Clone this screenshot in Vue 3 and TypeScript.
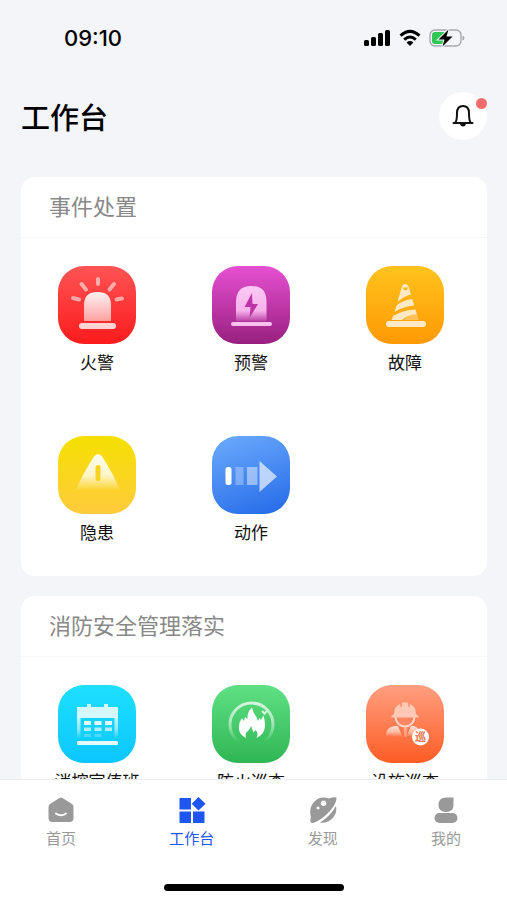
<script setup lang="ts">
import { ref } from 'vue'

interface Entry {
  id: string
  label: string
}

interface Section {
  title: string
  entries: Entry[]
}

const sections: Section[] = [
  {
    title: '事件处置',
    entries: [
      { id: 'fire', label: '火警' },
      { id: 'warning', label: '预警' },
      { id: 'fault', label: '故障' },
      { id: 'hazard', label: '隐患' },
      { id: 'action', label: '动作' },
    ],
  },
  {
    title: '消防安全管理落实',
    entries: [
      { id: 'duty', label: '消控室值班' },
      { id: 'patrol', label: '防火巡查' },
      { id: 'facility', label: '设施巡查' },
    ],
  },
]

const tabs: Entry[] = [
  { id: 'home', label: '首页' },
  { id: 'workbench', label: '工作台' },
  { id: 'discover', label: '发现' },
  { id: 'mine', label: '我的' },
]

const activeTab = ref('workbench')
</script>

<template>
  <div class="screen">
    <svg class="defs" width="0" height="0" aria-hidden="true">
      <defs>
        <linearGradient id="soft" x1="0" y1="0" x2="0" y2="1">
          <stop offset="0" stop-color="#fff" stop-opacity=".92" />
          <stop offset="1" stop-color="#fff" stop-opacity=".55" />
        </linearGradient>
        <linearGradient id="dome" x1="0" y1="0" x2="0" y2="1">
          <stop offset="0" stop-color="#ffd6fa" stop-opacity=".92" />
          <stop offset=".7" stop-color="#ffc4f4" stop-opacity=".88" />
          <stop offset="1" stop-color="#ffc4f4" stop-opacity=".15" />
        </linearGradient>
        <linearGradient id="fade" x1="0" y1="0" x2="0" y2="1">
          <stop offset="0" stop-color="#fff" stop-opacity=".95" />
          <stop offset=".6" stop-color="#fff" stop-opacity=".75" />
          <stop offset="1" stop-color="#fff" stop-opacity=".05" />
        </linearGradient>
        <linearGradient id="ring" x1="0" y1="0" x2="0" y2="1">
          <stop offset="0" stop-color="#fff" stop-opacity=".75" />
          <stop offset=".5" stop-color="#fff" stop-opacity=".5" />
          <stop offset=".9" stop-color="#fff" stop-opacity="0" />
        </linearGradient>
      </defs>
    </svg>

    <div class="status">
      <span class="time">09:10</span>
      <div class="signals">
        <svg width="27" height="18" viewBox="0 0 27 18" aria-hidden="true">
          <rect x="0" y="11" width="5" height="6" rx="1.500" />
          <rect x="7" y="8" width="5" height="9" rx="1.500" />
          <rect x="14" y="4" width="5" height="13" rx="1.500" />
          <rect x="21" y="1" width="5" height="16" rx="1.500" />
        </svg>
        <svg width="22" height="18" viewBox="0 0 22 18" fill="none" stroke="#000" stroke-width="3" aria-hidden="true">
          <path d="M1.500 6.600Q11-1.900 20.500 6.600" />
          <path d="M5.200 10.600Q11 5.500 16.800 10.600" />
          <path d="M7.600 13.400Q11 10.600 14.400 13.400L11 17Z" fill="#000" stroke="none" />
        </svg>
        <svg width="36" height="20" viewBox="0 0 36 20" aria-hidden="true">
          <rect x="1" y="2" width="31" height="16" rx="5" fill="none" stroke="#a5a8ac" stroke-width="1.400" />
          <path d="M6 4H15V16H6Q3 16 3 13V7Q3 4 6 4Z" fill="#30c755" />
          <path d="M33.500 7.500Q35.500 8 35.500 10T33.500 12.500Z" fill="#a5a8ac" />
          <path d="M19.500 1.500L9.500 11.500H15.500L13.500 18.500L23.500 8.500H17.500Z" stroke="#f3f5f9" stroke-width="2" paint-order="stroke" />
        </svg>
      </div>
    </div>

    <header class="header">
      <h1>工作台</h1>
      <button class="bell" type="button" aria-label="通知">
        <svg width="22" height="24" viewBox="0 0 22 24" fill="none" stroke="#111" stroke-width="2" stroke-linejoin="round" stroke-linecap="round" aria-hidden="true">
          <path d="M1.500 19H20.500M3.500 18.500Q5 16 5 9Q5 2 11 2Q17 2 17 9Q17 16 18.500 18.500" />
          <path d="M8 20H14Q13.500 22.500 11 22.500Q8.500 22.500 8 20Z" fill="#111" stroke="none" />
        </svg>
        <span class="dot"></span>
      </button>
    </header>

    <main class="content">
      <section v-for="section in sections" :key="section.title" class="card">
        <h2>{{ section.title }}</h2>
        <div class="grid">
          <button v-for="entry in section.entries" :key="entry.id" class="entry" type="button">
            <span class="tile" :class="entry.id">
              <svg viewBox="0 0 78 78" width="78" height="78" fill="none" aria-hidden="true">
                <g v-if="entry.id === 'fire'">
                  <path d="M26 55V39Q26 26 39.500 26Q53 26 53 39V55Z" fill="url(#soft)" />
                  <rect x="21" y="57" width="37" height="6" rx="3" fill="#fff" fill-opacity=".8" />
                  <g stroke="#fff" stroke-width="4" stroke-linecap="round" stroke-opacity=".55">
                    <path d="M40 13V18M23.500 18L28 23.500M56 18L51.500 23.500M15 32L21 33.500M64 32.500L58.500 33.500" />
                  </g>
                </g>
                <g v-else-if="entry.id === 'warning'">
                  <path d="M24 55V36Q24 20 39.500 20Q54.500 20 54.500 36V55Z" fill="url(#dome)" />
                  <rect x="19" y="56" width="41" height="4" rx="2" fill="#ffd0f6" fill-opacity=".9" />
                  <path d="M40 27L32.500 41H38.500L37.500 52L46 38H40.500Z" fill="#bd34a6" />
                </g>
                <g v-else-if="entry.id === 'fault'" fill="#ffe9c4">
                  <path fill-rule="evenodd" d="M32.500 32L35.500 22Q36.500 18 39 18Q42 18 43 22L45 28.500Q38 30 31.500 36ZM37 21.500H42L41 24H38Z" />
                  <path d="M30.500 39.500Q37 34 46.200 33L48.300 39.500Q37 40.500 28.500 46Z" />
                  <path d="M27 50Q38 43.500 49.500 43.500L51 48.500Q43 48 36 54H25.500Z" />
                  <path d="M37 54Q45 47.500 51 48.500L53 54Z" fill-opacity=".4" />
                  <rect x="20" y="55" width="40" height="6" rx="3" />
                </g>
                <g v-else-if="entry.id === 'hazard'">
                  <path d="M36 20.500Q40 15.500 44 20.500Q55 37 62 54H18Q25 37 36 20.500Z" fill="url(#fade)" />
                  <rect x="37.500" y="29" width="5" height="16" rx="2.500" fill="#f9d322" />
                </g>
                <g v-else-if="entry.id === 'action'" fill="#fff">
                  <rect x="13.500" y="31" width="6" height="18" rx="2.500" />
                  <rect x="23.500" y="31" width="8" height="18" fill-opacity=".3" />
                  <rect x="35" y="31" width="10.500" height="18" fill-opacity=".45" />
                  <path d="M47.500 25L65 40.500L47.500 56Z" fill-opacity=".65" />
                </g>
                <g v-else-if="entry.id === 'duty'" fill="#fff">
                  <path d="M19 22H29V19H33V22H46V19H50V22H60V33H19Z" fill-opacity=".82" />
                  <path d="M19 33H22.500V56H19ZM56.500 33H60V56H56.500Z" fill="url(#ring)" />
                  <rect x="19" y="56" width="41" height="4" rx="1.500" fill-opacity=".9" />
                  <path d="M26 36H33V40H26ZM36.500 36H43.500V40H36.500ZM47 36H54V40H47Z" fill-opacity=".88" />
                  <path d="M26 42.500H33V46H26ZM36.500 42.500H43.500V46H36.500ZM47 42.500H54V46H47Z" fill-opacity=".65" />
                  <path d="M26 49H33V52H26ZM36.500 49H43.500V52H36.500Z" fill-opacity=".25" />
                </g>
                <g v-else-if="entry.id === 'patrol'">
                  <circle cx="39.500" cy="39.500" r="21.500" stroke="url(#ring)" stroke-width="3" />
                  <path d="M50 26L52.500 28.500L55 26" stroke="#d8f8e0" stroke-width="2" />
                  <path d="M34 53Q26 49 27 41Q27.500 36 30 33L32 36L33 32L35.500 34Q35 27 40 22.500Q41 28 44.500 32L46 36L47.500 33L49 35L51.500 30.500Q54 39 52.500 44Q51 50 44.500 53Q47 48 43.500 45L41.500 47.500L39 41Q37 46 34.500 47Q33 50 34 53Z" fill="#fff" />
                </g>
                <g v-else>
                  <path d="M20 53V50Q20 42 29 41H32L37 53Z" fill="url(#ring)" />
                  <path d="M45 41H48Q54 42 55 53H40Z" fill="url(#ring)" />
                  <path d="M37.500 42.500H41.500L40.500 52H38.500Z" fill="#fff" fill-opacity=".35" />
                  <circle cx="39" cy="32" r="9.500" fill="#ff8660" stroke="#ffd5c6" stroke-width="2" />
                  <path d="M28 29Q28 21 34 19L35.500 25L36 17.500H42L42.500 25L44 19Q50 21 50 29L52.500 31V32.500H25.500V31Z" fill="#ffc9b6" />
                  <circle cx="54.500" cy="52" r="8.500" fill="#fff" />
                  <text x="54.500" y="56" text-anchor="middle" font-size="11" font-weight="700" fill="#e8764d">巡</text>
                </g>
              </svg>
            </span>
            <span class="label">{{ entry.label }}</span>
          </button>
        </div>
      </section>
    </main>

    <footer class="footer">
      <nav class="tabs">
        <a
          v-for="tab in tabs"
          :key="tab.id"
          href="#"
          class="tab"
          :class="{ active: tab.id === activeTab }"
          @click.prevent="activeTab = tab.id"
        >
          <svg width="28" height="28" viewBox="0 0 28 28" fill="currentColor" aria-hidden="true">
            <g v-if="tab.id === 'home'">
              <path d="M12.500 2Q14 1 15.500 2L25 8Q26.500 9 26.500 11V22Q26.500 26 22.500 26H5.500Q1.500 26 1.500 22V11Q1.500 9 3 8Z" />
              <path d="M9 17.500Q14 21 19 17.500" fill="none" stroke="#fff" stroke-width="2" stroke-linecap="round" />
            </g>
            <g v-else-if="tab.id === 'workbench'">
              <path d="M1.500 2H13V13.500H1.500ZM1.500 15.500H13V27H1.500ZM15 15.500H26.500V27H15ZM20.500 1L27.500 7.800L20.500 14.600L13.700 7.800Z" />
            </g>
            <g v-else-if="tab.id === 'discover'">
              <path fill-rule="evenodd" d="M27.500 1.500Q28 7 20.500 15.500Q12 24.500 4 27Q0 27.500 2 21.500Q-.5 12 5 6Q11-.5 20 2.500Q24 .8 27.500 1.500ZM14.500 4.500A2.800 2.800 0 1 0 14.600 4.500ZM9 10.500A1.500 1.500 0 1 0 9.100 10.500Z" />
              <path d="M27 10Q28.500 17.500 23 22.800Q18 27.500 11 26.500Q21 20.500 27 10Z" />
            </g>
            <g v-else>
              <path d="M14 1.500H21.500V9Q21.500 16 14 16Q6.500 16 6.500 9Q6.500 1.500 14 1.500Z" />
              <rect x="2.500" y="17" width="23" height="10" rx="5" />
            </g>
          </svg>
          <span>{{ tab.label }}</span>
        </a>
      </nav>
      <div class="indicator"></div>
    </footer>
  </div>
</template>

<style>
body {
  margin: 0;
}
</style>

<style scoped>
.screen {
  display: flex;
  flex-direction: column;
  height: 100vh;
  background: #f3f5f9;
  color: #111;
  font-family: 'Noto Sans CJK SC', sans-serif;
}

.defs {
  position: absolute;
}

button {
  padding: 0;
  border: 0;
  background: none;
  color: inherit;
  font: inherit;
  cursor: pointer;
}

.status {
  display: flex;
  flex: none;
  align-items: center;
  justify-content: space-between;
  height: 76px;
  padding: 0 42px 0 64px;
}

.time {
  font-family: Inter, sans-serif;
  font-size: 22px;
  font-weight: 500;
  color: #000;
}

.signals {
  display: flex;
  align-items: center;
  gap: 8px;
}

.header {
  display: flex;
  flex: none;
  align-items: center;
  justify-content: space-between;
  padding: 16px 20px 37px 21px;
}

h1 {
  margin: 0;
  font-size: 29px;
  font-weight: 500;
  line-height: 48px;
  color: #000;
}

.bell {
  position: relative;
  display: grid;
  place-items: center;
  width: 48px;
  height: 48px;
  border-radius: 50%;
  background: #fff;
}

.dot {
  position: absolute;
  top: 6px;
  right: 0;
  width: 11px;
  height: 11px;
  border-radius: 50%;
  background: #f56c6c;
}

.content {
  flex: 1;
  min-height: 0;
  padding: 0 20px 0 21px;
  overflow-y: auto;
  scrollbar-width: none;
}

.card {
  margin-bottom: 20px;
  border-radius: 14px;
  background: #fff;
}

h2 {
  margin: 0;
  padding: 0 28px 4px;
  border-bottom: 1px solid #f7f7f9;
  font-size: 22px;
  font-weight: 400;
  line-height: 56px;
  color: #888;
}

.grid {
  display: grid;
  grid-template-columns: repeat(3, 78px);
  justify-content: space-between;
  row-gap: 62px;
  padding: 28px 43px 32px 37px;
}

.entry {
  display: flex;
  flex-direction: column;
  align-items: center;
  gap: 6px;
}

.tile {
  display: block;
  width: 78px;
  height: 78px;
  border-radius: 26px;
}

.tile svg,
.tab svg {
  display: block;
}

.fire { background: linear-gradient(#ff5455, #fb1b1c); }
.warning { background: linear-gradient(#e650d2, #98207f); }
.fault { background: linear-gradient(#ffc31d, #ff9904); }
.hazard { background: linear-gradient(#f5e000, #ffcb3d); }
.action { background: linear-gradient(160deg, #6dabfd, #2369e8); }
.duty { background: linear-gradient(#1fe0ff, #0bc6fc); }
.patrol { background: linear-gradient(#5fe084, #2fb654); }
.facility { background: linear-gradient(#ff9f80, #fc5c25); }

.label {
  font-size: 17px;
  line-height: 24px;
  white-space: nowrap;
}

.footer {
  flex: none;
  border-top: 1px solid #ebecef;
  background: #fff;
}

.tabs {
  display: flex;
  justify-content: space-between;
  padding: 16px 46px 0;
}

.tab {
  display: flex;
  flex-direction: column;
  align-items: center;
  gap: 3px;
  color: #999;
  font-size: 15px;
  line-height: 22px;
  text-decoration: none;
}

.tab.active {
  color: #1f55f0;
}

.indicator {
  width: 180px;
  height: 7px;
  margin: 35px auto 9px;
  border-radius: 4px;
  background: #000;
}
</style>
